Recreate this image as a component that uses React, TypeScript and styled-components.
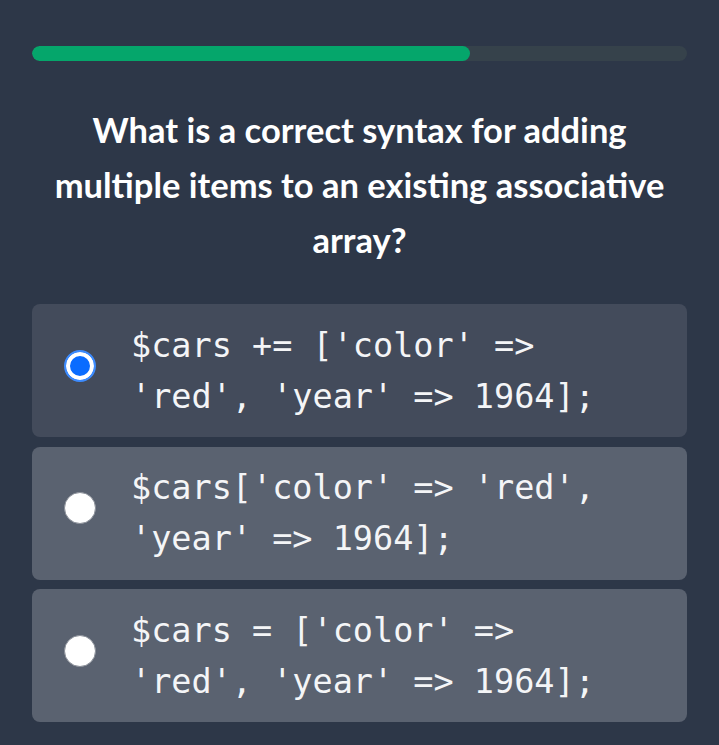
import styled, { createGlobalStyle } from 'styled-components';

const GlobalStyle = createGlobalStyle`
  html, body {
    margin: 0;
    padding: 0;
    background: #2d3748;
  }
  * {
    box-sizing: border-box;
  }
`;

const Page = styled.div`
  width: 719px;
  min-height: 745px;
  background: #2d3748;
  padding: 46px 32px 20px;
  display: flex;
  flex-direction: column;
`;

const Track = styled.div`
  height: 15px;
  border-radius: 8px;
  background: #36424b;
  overflow: hidden;
`;

const Fill = styled.div`
  height: 100%;
  border-radius: 8px;
  background: #05a66b;
`;

const Question = styled.h2`
  margin: 41px 0 37px;
  padding: 0 10px;
  font-family: 'Source Sans Pro', Lato, 'Liberation Sans', sans-serif;
  font-weight: 700;
  font-size: 34.5px;
  line-height: 55px;
  color: #fff;
  text-align: center;
`;

const Options = styled.div`
  display: flex;
  flex-direction: column;
  gap: 9.5px;
`;

const Option = styled.label<{ $selected?: boolean }>`
  display: flex;
  align-items: center;
  height: 133px;
  padding: 0 20px 0 32px;
  border-radius: 8px;
  background: ${(p) => (p.$selected ? '#434b5b' : '#5a6270')};
  cursor: pointer;
`;

const Radio = styled.span<{ $selected?: boolean }>`
  flex: none;
  width: 32px;
  height: 32px;
  margin-bottom: 10px;
  border-radius: 50%;
  background: ${(p) => (p.$selected ? '#0a6cff' : '#fff')};
  border: ${(p) => (p.$selected ? '2px solid #3d8bfd' : '1.5px solid #8a8f98')};
  box-shadow: ${(p) => (p.$selected ? 'inset 0 0 0 4px #fff' : 'none')};
`;

const Code = styled.code`
  margin-left: 35px;
  font-family: 'DejaVu Sans Mono', 'Liberation Mono', monospace;
  font-size: 33.5px;
  line-height: 51px;
  color: #f4f5f7;
  white-space: pre-wrap;
`;

const answers = [
  { id: 1, lines: ["$cars += ['color' =>", "'red', 'year' => 1964];"], selected: true },
  { id: 2, lines: ["$cars['color' => 'red',", "'year' => 1964];"] },
  { id: 3, lines: ["$cars = ['color' =>", "'red', 'year' => 1964];"] },
];

export default function App() {
  const progress = 66.8;

  return (
    <Page>
      <GlobalStyle />
      <Track>
        <Fill style={{ width: `${progress}%` }} />
      </Track>
      <Question>What is a correct syntax for adding multiple items to an existing associative array?</Question>
      <Options>
        {answers.map((a) => (
          <Option key={a.id} $selected={a.selected}>
            <Radio $selected={a.selected} />
            <Code>
              {a.lines[0]}
              <br />
              {a.lines[1]}
            </Code>
          </Option>
        ))}
      </Options>
    </Page>
  );
}
